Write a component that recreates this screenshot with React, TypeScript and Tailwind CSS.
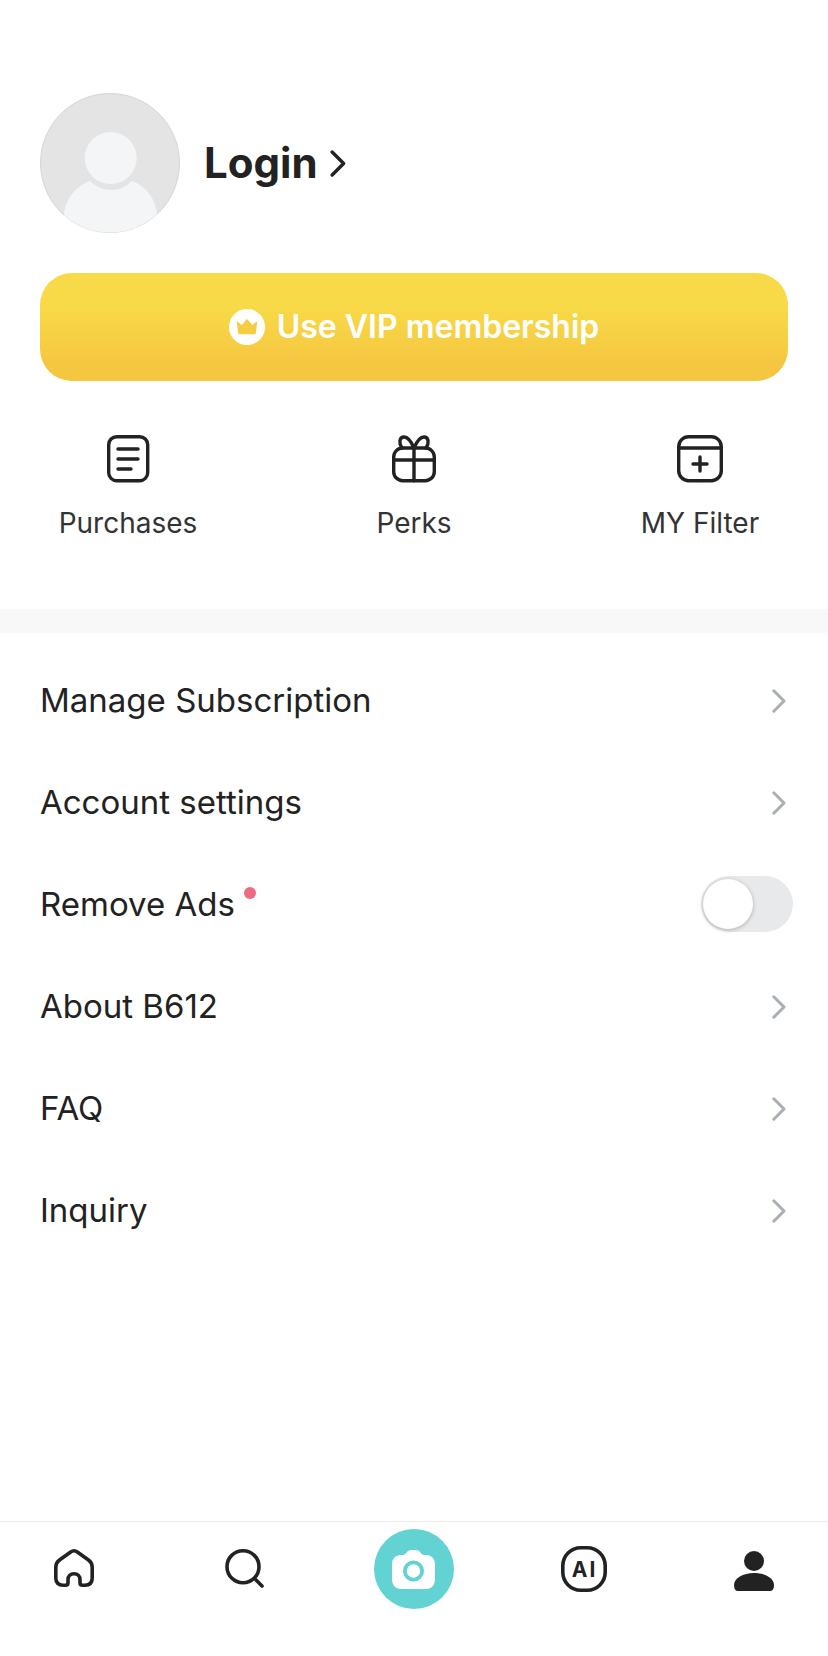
import { ReactNode } from 'react';

const menuItems = ['Manage Subscription', 'Account settings', 'Remove Ads', 'About B612', 'FAQ', 'Inquiry'];

function Avatar() {
  return (
    <svg width="140" height="140" viewBox="0 0 140 140" className="shrink-0">
      <defs>
        <clipPath id="avatar-clip">
          <circle cx="70" cy="70" r="69.5" />
        </clipPath>
      </defs>
      <circle cx="70" cy="70" r="69.5" fill="#e4e4e4" stroke="#d6d6d6" strokeWidth="1" />
      <g clipPath="url(#avatar-clip)">
        <path d="M24 122 C25 106 36 93 50 88 C56 94 63 97 71 97 C79 97 86 94 92 88 C106 93 116 106 117 122 L117 140 L24 140 Z" fill="#f4f5f7" />
      </g>
      <circle cx="70.7" cy="65" r="26" fill="#f4f5f7" />
    </svg>
  );
}

function Chevron({ className, width, height }: { className: string; width: number; height: number }) {
  return (
    <svg width={width} height={height} viewBox="0 0 14 24" fill="none" className={className}>
      <path d="M1.8 1.8 L12 12 L1.8 22.2" stroke="currentColor" strokeWidth="3" strokeLinecap="round" strokeLinejoin="round" />
    </svg>
  );
}

function PurchasesIcon() {
  return (
    <svg width="50" height="50" viewBox="0 0 50 50" fill="none" stroke="#222" strokeWidth="3.4" strokeLinecap="round">
      <rect x="5.7" y="3.7" width="39" height="44" rx="8" />
      <path d="M15 16 H35 M15 26 H35 M15 36 H28" />
    </svg>
  );
}

function PerksIcon() {
  return (
    <svg width="50" height="50" viewBox="0 0 50 50" fill="none" stroke="#222" strokeWidth="3.4" strokeLinecap="round" strokeLinejoin="round">
      <rect x="4.7" y="15" width="40.6" height="32.7" rx="9" />
      <path d="M4.7 27 H45.3 M25 15 V47.7" />
      <path d="M25 15 C22 8 18 3.5 14.5 4 C10.5 4.5 9.5 10 13 15" />
      <path d="M25 15 C28 8 32 3.5 35.5 4 C39.5 4.5 40.5 10 37 15" />
    </svg>
  );
}

function FilterIcon() {
  return (
    <svg width="50" height="50" viewBox="0 0 50 50" fill="none" stroke="#222" strokeWidth="3.4" strokeLinecap="round">
      <rect x="3.7" y="3.7" width="42.6" height="44" rx="10" />
      <path d="M3.7 15 H46.3" />
      <path d="M18 31 H32 M25 24 V38" />
    </svg>
  );
}

function QuickLink({ icon, label }: { icon: ReactNode; label: string }) {
  return (
    <div className="flex w-[176px] flex-col items-center">
      {icon}
      <span className="mt-[20px] text-[28px] leading-[40px] text-[#333]">{label}</span>
    </div>
  );
}

function NavSlot({ children }: { children: ReactNode }) {
  return <div className="flex w-10 items-center justify-center">{children}</div>;
}

export default function App() {
  return (
    <div className="flex h-[1656px] w-[828px] flex-col bg-white font-['Inter',sans-serif] text-[#222]">
      {/* Profile */}
      <div className="flex items-center px-10 pt-[93px]">
        <Avatar />
        <span className="ml-[24px] text-[42px] font-bold leading-none">Login</span>
        <Chevron className="ml-3 text-[#222]" width={16} height={27} />
      </div>

      {/* VIP button */}
      <div className="mx-10 mt-10 flex h-[108px] items-center justify-center rounded-[32px] bg-gradient-to-b from-[#f8da48] from-30% to-[#f5c640] to-85%">
        <svg width="36" height="36" viewBox="0 0 36 36">
          <circle cx="18" cy="18" r="18" fill="#fff" />
          <path d="M8.5 13.5 L13 17 L18 11 L23 17 L27.5 13.5 L26 24.5 H10 Z" fill="#f6cd42" stroke="#f6cd42" strokeWidth="1.4" strokeLinejoin="round" />
        </svg>
        <span className="ml-3 text-[32px] font-semibold text-white">Use VIP membership</span>
      </div>

      {/* Quick links */}
      <div className="mt-[52px] flex justify-between px-10">
        <QuickLink icon={<PurchasesIcon />} label="Purchases" />
        <QuickLink icon={<PerksIcon />} label="Perks" />
        <QuickLink icon={<FilterIcon />} label="MY Filter" />
      </div>

      <div className="mt-[66px] h-6 shrink-0 bg-[#f8f8f8]" />

      {/* Menu */}
      <div className="mt-4 px-10">
        {menuItems.map((item) => (
          <div key={item} className="flex h-[102px] items-center justify-between">
            <div className="relative mt-[2px] text-[33px]">
              {item}
              {item === 'Remove Ads' && (
                <span className="absolute -right-[21px] top-[7px] size-3 rounded-full bg-[#ec6c82]" />
              )}
            </div>
            {item === 'Remove Ads' ? (
              <div className="-mr-[5px] flex h-[56px] w-[92px] items-center rounded-full bg-[#e8e9eb] pl-[2px]">
                <div className="size-[50px] rounded-full bg-white shadow-[0_1px_4px_rgba(0,0,0,0.25)]" />
              </div>
            ) : (
              <Chevron className="mt-[2px] mr-[2px] text-[#a9afb5]" width={14} height={24} />
            )}
          </div>
        ))}
      </div>

      <div className="flex-1" />

      {/* Bottom nav */}
      <div className="flex h-[135px] shrink-0 items-start border-t border-[#ebebeb] pt-[7px]">
        <div className="flex h-20 w-full justify-between px-[54px]">
          <NavSlot>
            <svg width="44" height="44" viewBox="0 0 44 44" fill="none" stroke="#222" strokeWidth="3.6" strokeLinejoin="round" className="shrink-0">
              <path d="M22 3.8 C23.2 3.8 24.3 4.3 25.3 5 L36.5 13 C39 14.8 40.2 17 40.2 20 V31 C40.2 35.8 37.5 38.2 33 38.2 H30.5 C29 38.2 28 37.2 28 35.7 V32.8 C28 29 25.5 26.8 22 26.8 C18.5 26.8 16 29 16 32.8 V35.7 C16 37.2 15 38.2 13.5 38.2 H11 C6.5 38.2 3.8 35.8 3.8 31 V20 C3.8 17 5 14.8 7.5 13 L18.7 5 C19.7 4.3 20.8 3.8 22 3.8 Z" />
            </svg>
          </NavSlot>
          <NavSlot>
            <svg width="44" height="44" viewBox="0 0 44 44" fill="none" stroke="#222" strokeWidth="3.6" strokeLinecap="round" className="shrink-0">
              <circle cx="21" cy="19.7" r="16" />
              <path d="M34 33 L40 39" />
            </svg>
          </NavSlot>
          <NavSlot>
            <div className="flex size-20 shrink-0 items-center justify-center rounded-full bg-[#62d2d2]">
              <svg width="43" height="39" viewBox="0 0 43 39" className="-ml-[2px]">
                <path d="M9 5 H10.5 C12 5 13 4.4 14 3.2 C15.5 1.2 17 0 20 0 H23 C26 0 27.5 1.2 29 3.2 C30 4.4 31 5 32.5 5 H34 C39.5 5 43 9 43 14 V29 C43 35 39.5 39 34 39 H9 C3.5 39 0 35 0 29 V14 C0 9 3.5 5 9 5 Z" fill="#fff" />
                <circle cx="21.5" cy="21" r="8.6" fill="none" stroke="#62d2d2" strokeWidth="3.8" />
              </svg>
            </div>
          </NavSlot>
          <NavSlot>
            <svg width="46" height="46" viewBox="0 0 46 46" fill="none" className="shrink-0">
              <rect x="1.8" y="1.8" width="42.4" height="42.4" rx="18" stroke="#222" strokeWidth="3.6" />
              <text x="23.5" y="30.5" textAnchor="middle" fontFamily="Inter, sans-serif" fontWeight="700" fontSize="21" letterSpacing="2" fill="#222">AI</text>
            </svg>
          </NavSlot>
          <NavSlot>
            <svg width="40" height="46" viewBox="0 0 40 46" fill="#222" className="shrink-0">
              <circle cx="20" cy="15" r="10" />
              <path d="M0 39 C0 32 9 27 20 27 C31 27 40 32 40 39 C40 43 38.5 45 36 45 H4 C1.5 45 0 43 0 39 Z" />
            </svg>
          </NavSlot>
        </div>
      </div>
    </div>
  );
}
